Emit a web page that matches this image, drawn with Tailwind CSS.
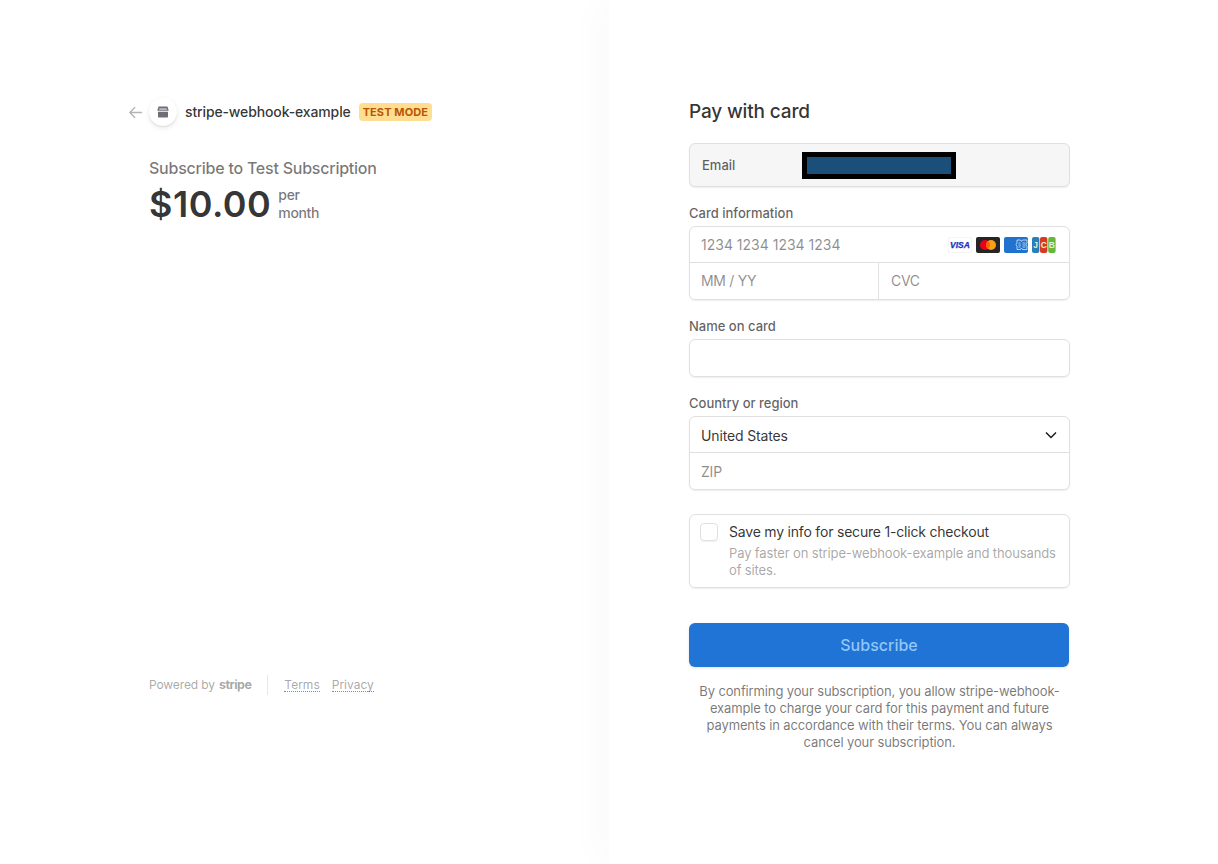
<!DOCTYPE html>
<html lang="en">
<head>
    <meta charset="UTF-8">
    <meta name="viewport" content="width=device-width, initial-scale=1.0">
    <title>Subscribe to Test Subscription</title>
    <script src="https://cdn.jsdelivr.net/npm/@tailwindcss/browser@4"></script>
</head>
<body class="bg-white font-['Inter',sans-serif] text-[#1a1a1a] antialiased">
    <div class="flex h-[864px] w-[1218px] overflow-hidden">

        <!-- left: product summary -->
        <div class="flex h-full w-[609px] shrink-0 flex-col pt-[98px] pl-[128px]">
            <div class="flex h-[28px] items-center">
                <svg class="mr-[6px] h-[15px] w-[15px]" viewBox="0 0 16 16" fill="none" stroke="#b5b5b5" stroke-width="1.5">
                    <path d="M15 8H2M7.5 2.5 2 8l5.5 5.5"/>
                </svg>
                <div class="flex h-[28px] w-[28px] items-center justify-center rounded-full bg-white shadow-[0_2px_5px_rgba(60,66,87,0.12),0_1px_1px_rgba(0,0,0,0.08)]">
                    <svg class="h-[12px] w-[12px]" viewBox="0 0 12 12" fill="#6d6e78">
                        <path d="M1.5 0.5h9l1 3.2v1H.5v-1z"/>
                        <path d="M1 5.8h10v5a.7.7 0 0 1-.7.7H1.7a.7.7 0 0 1-.7-.7z"/>
                        <rect x="2.2" y="2.6" width="7.6" height="0.9" fill="#fff"/>
                    </svg>
                </div>
                <span class="ml-[8px] text-[14px] font-medium leading-[20px] tracking-[-0.13px] text-[#1a1a1ae6]">stripe-webhook-example</span>
                <span class="ml-[8px] flex h-[18px] items-center rounded-[4px] bg-[#ffde92] px-[4px] text-[11px] font-bold tracking-[0.1px] text-[#bb5504]">TEST MODE</span>
            </div>

            <div class="mt-[30px] pl-[21px]">
                <p class="text-[16px] font-medium leading-[24px] tracking-[-0.23px] text-[#1a1a1a99]">Subscribe to Test Subscription</p>
                <div class="mt-[2px] flex items-center">
                    <span class="text-[36px] font-semibold leading-[44px] tracking-[0.5px] text-[#1a1a1ae6]">$10.00</span>
                    <span class="ml-[7px] w-[50px] text-[14px] font-medium leading-[18px] tracking-[-0.35px] text-[#1a1a1a99]">per month</span>
                </div>
            </div>

            <div class="mt-auto mb-[170px] flex h-[18px] items-center pl-[21px] text-[12px] text-[#1a1a1a66]">
                <span class="tracking-[-0.12px]">Powered by</span>
                <span class="ml-[4px] text-[12.5px] font-bold tracking-[-0.5px] text-[#1a1a1a66]">stripe</span>
                <div class="mx-[16px] h-[20px] w-px bg-[#1a1a1a1a]"></div>
                <a class="border-b border-dotted border-[#1a1a1a80] leading-[13px]">Terms</a>
                <a class="ml-[12px] border-b border-dotted border-[#1a1a1a80] leading-[13px]">Privacy</a>
            </div>
        </div>

        <!-- right: payment form -->
        <div class="h-full flex-1 bg-white pt-[98px] pl-[80px] shadow-[-15px_0_30px_0_rgba(0,0,0,0.018)]">
            <div class="w-[381px]">
                <h2 class="text-[19px] font-medium leading-[28px] tracking-[-0.15px] text-[#1a1a1ae6]">Pay with card</h2>

                <div class="mt-[17px] flex h-[44px] items-center rounded-[6px] border border-[#e0e0e0] bg-[#f6f6f6] pt-[1px] pl-[12px] shadow-[0_1px_1.5px_rgba(0,0,0,0.07)]">
                    <span class="w-[100px] text-[13px] font-medium text-[#1a1a1ab3]">Email</span>
                    <div class="-mt-[1px] h-[27px] w-[154px] border-[5px] border-black bg-[#1a4f7a]"></div>
                </div>

                <label class="mt-[17px] block text-[13px] font-medium leading-[18px] text-[#1a1a1ab3]">Card information</label>
                <div class="mt-[4px] h-[74px] rounded-[6px] border border-[#e0e0e0] shadow-[0_1px_1.5px_rgba(0,0,0,0.07)]">
                    <div class="flex h-[36px] items-center justify-between border-b border-[#e0e0e0] pr-[13px] pl-[11px]">
                        <span class="text-[14px] text-[#1a1a1a80]">1234 1234 1234 1234</span>
                        <div class="flex items-center gap-[4px]">
                            <svg class="h-[16px] w-[24px]" viewBox="0 0 24 16">
                                <rect x="0.25" y="0.25" width="23.5" height="15.5" rx="1.5" fill="#fff" stroke="#e0e0e0" stroke-width="0.5"/>
                                <text x="12" y="11" text-anchor="middle" font-family="Liberation Sans" font-size="8.5" font-weight="700" font-style="italic" fill="#1a2fc0" stroke="#1a2fc0" stroke-width="0.25">VISA</text>
                            </svg>
                            <svg class="h-[16px] w-[24px]" viewBox="0 0 24 16">
                                <rect width="24" height="16" rx="2" fill="#252525"/>
                                <circle cx="9" cy="8" r="5" fill="#eb001b"/>
                                <circle cx="15" cy="8" r="5" fill="#f79e1b"/>
                                <path d="M12 4a5 5 0 0 1 0 8 5 5 0 0 1 0-8z" fill="#ff5f00"/>
                            </svg>
                            <svg class="h-[16px] w-[24px]" viewBox="0 0 24 16">
                                <rect width="24" height="16" rx="2" fill="#1f72cd"/>
                                <path d="M13 3h3.5l1 1.5 1-1.500H23v3l-1 1.500 1 1.500v3.500h-4.500l-1-1.500-1 1.500H13v-3.500l-1-1.500 1-1.500z" fill="none" stroke="#d8e8fa" stroke-width="0.8"/>
                                <path d="M14.500 6h2M18.500 6h3M14.500 8h2.500M18.500 8h3M14.500 10h2M18.500 10h3" stroke="#d8e8fa" stroke-width="0.8"/>
                            </svg>
                            <svg class="h-[16px] w-[24px]" viewBox="0 0 24 16" font-family="Liberation Sans" font-size="8.5" font-weight="700" fill="#dff0e0" text-anchor="middle">
                                <rect x="0" y="0" width="7.4" height="16" rx="2" fill="#2a7fb8"/>
                                <rect x="8" y="0" width="7.4" height="16" rx="2" fill="#d83a1e"/>
                                <rect x="16.200" y="0" width="7.400" height="16" rx="2" fill="#64b83c"/>
                                <text x="3.700" y="11">J</text>
                                <text x="11.700" y="11">C</text>
                                <text x="19.900" y="11">B</text>
                            </svg>
                        </div>
                    </div>
                    <div class="flex h-[36px]">
                        <div class="flex w-[189px] items-center border-r border-[#e0e0e0] pb-[1px] pl-[11px] text-[14px] tracking-[-0.3px] text-[#1a1a1a80]">MM / YY</div>
                        <div class="flex flex-1 items-center pb-[1px] pl-[12px] text-[14px] tracking-[-0.3px] text-[#1a1a1a80]">CVC</div>
                    </div>
                </div>

                <label class="mt-[17px] block text-[13px] font-medium leading-[18px] text-[#1a1a1ab3]">Name on card</label>
                <div class="mt-[4px] h-[38px] rounded-[6px] border border-[#e0e0e0] shadow-[0_1px_1.5px_rgba(0,0,0,0.07)]"></div>

                <label class="mt-[17px] block text-[13px] font-medium leading-[18px] text-[#1a1a1ab3]">Country or region</label>
                <div class="mt-[4px] h-[74px] rounded-[6px] border border-[#e0e0e0] shadow-[0_1px_1.5px_rgba(0,0,0,0.07)]">
                    <div class="flex h-[36px] items-center justify-between border-b border-[#e0e0e0] pt-[1px] pr-[12px] pl-[11px]">
                        <span class="text-[14px] tracking-[-0.15px] text-[#1a1a1ae6]">United States</span>
                        <svg class="h-[12px] w-[12px]" viewBox="0 0 12 12" fill="none" stroke="#1a1a1a" stroke-width="1.5">
                            <path d="M1 3.5 6 8.5l5-5"/>
                        </svg>
                    </div>
                    <div class="flex h-[36px] items-center pl-[11px] text-[14px] tracking-[-0.2px] text-[#1a1a1a80]">ZIP</div>
                </div>

                <div class="mt-[24px] flex h-[74px] rounded-[6px] border border-[#e0e0e0] pt-[8px] pr-[10px] pl-[10px] shadow-[0_1px_1.5px_rgba(0,0,0,0.07)]">
                    <div class="h-[18px] w-[18px] shrink-0 rounded-[4px] border border-[#e0e0e0] shadow-[0_1px_1px_rgba(0,0,0,0.06)]"></div>
                    <div class="ml-[11px]">
                        <p class="text-[14px] leading-[18px] tracking-[-0.2px] text-[#1a1a1ae6]">Save my info for secure 1-click checkout</p>
                        <p class="mt-[4px] text-[13px] leading-[17px] tracking-[-0.13px] text-[#1a1a1a66]">Pay faster on stripe-webhook-example and thousands of sites.</p>
                    </div>
                </div>

                <button class="mt-[35px] h-[44px] w-[380px] rounded-[6px] bg-[#2074d5] text-[16px] font-medium text-[#93c7f6] shadow-[0_1px_3px_rgba(0,0,0,0.12)]">Subscribe</button>

                <p class="mx-auto mt-[16px] w-[372px] text-center text-[13px] leading-[17px] tracking-[-0.13px] text-[#1a1a1a99]">By confirming your subscription, you allow stripe-webhook-example to charge your card for this payment and future payments in accordance with their terms. You can always cancel your subscription.</p>
            </div>
        </div>
    </div>
</body>
</html>
